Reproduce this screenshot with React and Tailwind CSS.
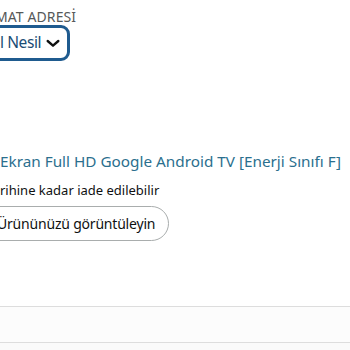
export default function App() {
  return (
    <div className="w-[350px] h-[350px] overflow-hidden bg-white font-['Noto_Sans',sans-serif] text-[#0f1111]">
      {/* address block */}
      <div className="pt-[9px] -ml-[5px]">
        <div className="text-[14px] leading-[16px] text-[#565959] tracking-[0.1px]">
          MAT ADRESİ
        </div>
        <div className="-ml-[4px] inline-flex items-center gap-[4px] h-[36px] pl-[6px] pr-[6px] rounded-[9px] border-[3px] border-[#1f5b8f] text-[15.5px] text-[#1a4d75]">
          <span className="tracking-[-0.4px]">l Nesil</span>
          <svg width="16" height="16" viewBox="0 0 24 24" fill="none" stroke="#0f1111" strokeWidth="3.5" strokeLinecap="round" strokeLinejoin="round">
            <path d="M4 9l8 7 8-7" />
          </svg>
        </div>
      </div>

      {/* product */}
      <div className="mt-[90px]">
        <div className="text-[15.3px] leading-[20px] text-[#2b6f8e] whitespace-nowrap">
          Ekran Full HD Google Android TV [Enerji Sınıfı F]
        </div>
        <div className="mt-[10px] text-[13px] leading-[18px] whitespace-nowrap">
          rihine kadar iade edilebilir
        </div>
        <div className="mt-[7px] -ml-[20px] inline-flex items-center h-[35px] pl-[16px] pr-[13px] rounded-full border border-[#a9adad] text-[14px] tracking-[-0.2px] whitespace-nowrap">
          Ürününüzü görüntüleyin
        </div>
      </div>

      {/* bottom rows */}
      <div className="mt-[65px] border-t border-[#dddddd] bg-[#fcfcfc] h-[36px]" />
      <div className="border-t border-[#dddddd] bg-[#fafafa] h-[10px]" />
    </div>
  );
}
